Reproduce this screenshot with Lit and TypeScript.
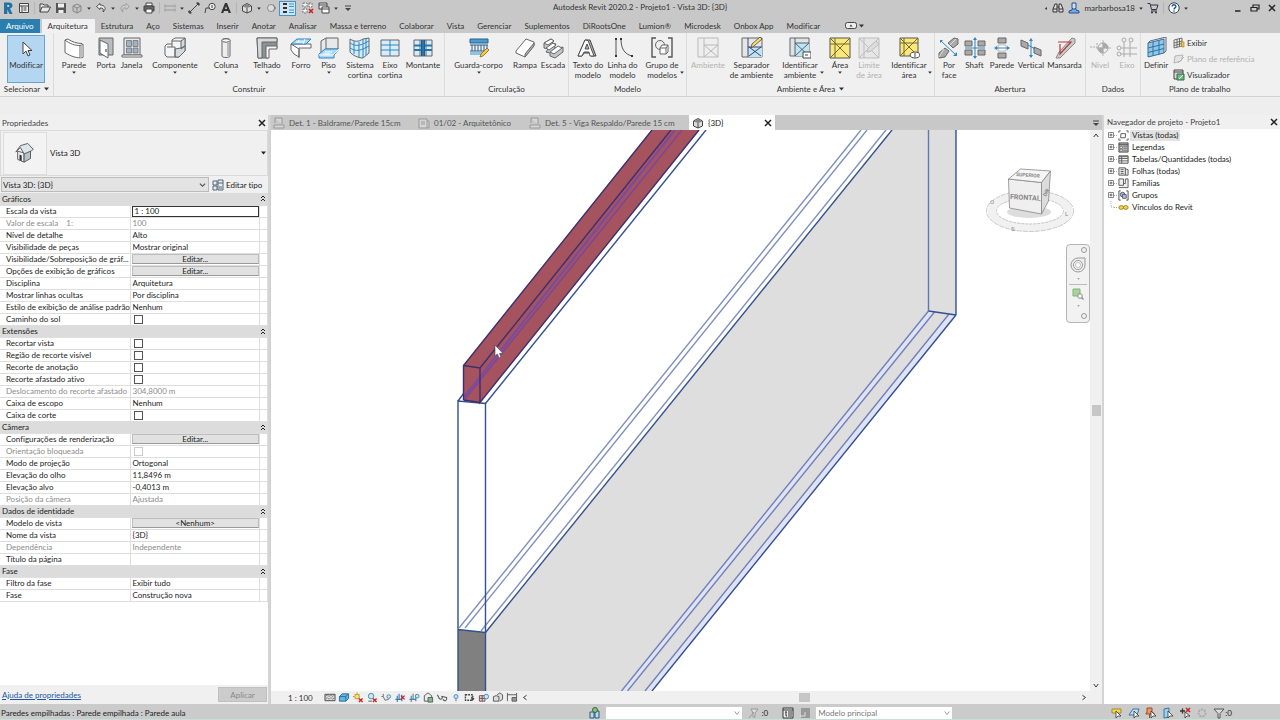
import { LitElement, html, svg, css, nothing, TemplateResult } from "lit";
import { customElement, property, state } from "lit/decorators.js";
import { classMap } from "lit/directives/class-map.js";
import { styleMap } from "lit/directives/style-map.js";

const K = "#666";
const B = "#2f86c4";
const G = "#d7dadc";

/* Ribbon glyphs, 22 x 22 */
const big: Record<string, TemplateResult> = {
  cursor: svg`<path d="M8 4v12l3-3 2 5 2-1-2-4.500h4z" fill="#fff" stroke="#444"/>`,
  wall: svg`<path d="M2 3l3-1c4 3 9 4.500 14 4.500l1 1v13c-6 1-12-1-18-5z" fill="#fff" stroke="${K}"/><path d="M2 3c5 4 10 5.500 15 5.500V20M17 8.500l3-1" fill="none" stroke="${K}"/><path d="M17 9l3-1v12l-3 1z" fill="#bbb"/>`,
  door: svg`<path d="M4 1h14v17H4z" fill="#b9bdc0" stroke="${K}"/><path d="M5 3l8 4v14l-8-5z" fill="#fff" stroke="${K}"/><path d="M11 12v3" stroke="#333"/>`,
  window: svg`<path d="M3 1h16v17H3z" fill="#e8e8e8" stroke="${K}"/><path d="M5.500 3.500h5v6h-5zM12 3.500h5v6h-5zM5.500 11h5v5h-5zM12 11h5v5h-5z" fill="#9fb3c4" stroke="${K}" stroke-width=".7"/><path d="M1 18h20v2H1z" fill="#fff" stroke="${K}"/>`,
  component: svg`<path d="M1 9l2-2h5V3l3-2h10v13l-6 6H3l-2-2z" fill="#f4f5f6" stroke="${K}"/><path d="M11 12l6-1 4-2v5l-6 6h-4zM17 4l4-3v8l-4 3z" fill="${G}" stroke="${K}"/><path d="M8 4h9M3 10h8v10M8 7v3" fill="none" stroke="${K}"/>`,
  column: svg`<path d="M7 3c0-2 8-2 8 0v16c0 2-8 2-8 0z" fill="#eceeef" stroke="${K}"/><ellipse cx="11" cy="3.500" rx="4" ry="1.700" fill="#fff" stroke="${K}"/><path d="M13 6v13" stroke="#bbb" stroke-width="2"/>`,
  roof: svg`<path d="M1 1h20v10h-9v10H2z" fill="#8d9194" stroke="${K}"/><path d="M1 1h20v4H6v16H2z" fill="${G}" stroke="${K}"/><path d="M10 9h11v3h-8v9h-3z" fill="#f6f6f6" stroke="${K}"/>`,
  ceiling: svg`<path d="M1 7h20v4H9v9l-5-3-3-4z" fill="#fff" stroke="${K}"/><path d="M1 7l6-5h14l-5 5z" fill="#a9d8f2" stroke="${B}"/><path d="M6 5h8M9 3l-1 3M15 2l-2 5" stroke="#fff"/><path d="M1 7l8 5v9" fill="none" stroke="${K}"/>`,
  floor: svg`<path d="M3 4l5-3h12v12l-5 4H3z" fill="#e6e8e9" stroke="${K}"/><path d="M8 1v11l-6 5M8 12h12" fill="none" stroke="${K}"/><path d="M1 17l6-5h14l-5 6v3H1z" fill="#a9d8f2" stroke="${B}"/><path d="M7 15h7M5 17h7M1 18h14l6-6" fill="none" stroke="#fff"/>`,
  curtain: svg`<path d="M1 2c5 3 8 3 13 0l6-1v15l-6 5C9 21 3 18 1 15z" fill="#d4ebf8" stroke="${K}"/><path d="M1 6c5 3 8 3 13 1l6-3M1 11c5 3 8 3 13 1l6-3M5 4v13M10 5v15M14 2v19M17 2v16" fill="none" stroke="${B}"/>`,
  grid: svg`<path d="M2 3h18v16H2z" fill="#d9edf8" stroke="${K}"/><path d="M11 3v16M2 8h18M2 13h18" stroke="${B}"/>`,
  mullion: svg`<path d="M2 3h18v16H2z" fill="#d9edf8" stroke="${K}"/><path d="M8 3v16M14 3v16" stroke="${K}"/><path d="M9 3h4v16H9z" fill="#2676b2"/><path d="M2 8.500h18M2 13h18" stroke="#2676b2" stroke-width="2"/><path d="M9.500 3v16M12.500 3v16" stroke="#1c4d74" stroke-width=".6"/>`,
  rail: svg`<path d="M2 2h18v4H2z" fill="#4a9bd0" stroke="#27618b"/><path d="M2 8h18M2 14h18M4 8v6M7 8v6M10 8v6M13 8v6M16 8v6M19 8v6" stroke="#27618b"/><path d="M2 15h12v3H2z" fill="#8fc3e4"/><path d="M12 20l1-3 6-6 2 2-6 6z" fill="#f7c84b" stroke="#8a6414" stroke-width=".8"/>`,
  ramp: svg`<path d="M2 14L12 2l8 3v3l-9 12-9-4z" fill="#fff" stroke="${K}"/><path d="M20 6v3l-9 11v-3z" fill="#aeb2b5" stroke="${K}"/>`,
  stair: svg`<path d="M2 6l7-4 3 2-2 2 4 1-2 3 5 1 4-1v5l-8 6-5-2v-3l-4-1 2-3-4-1z" fill="#c4c7c9" stroke="${K}"/><path d="M2 6l7-4 3 2-6 4zM4 11l7-5 3 2-7 5zM8 15l8-6 4 2-8 6z" fill="#fff" stroke="${K}"/>`,
  text3d: svg`<path d="M1 19L8 3h5l6 16h-5l-1-3H7l-2 3z" fill="#aeb2b5" stroke="#444"/><path d="M1 19L8 3l3 .5L17 19h-4l-1-4H7l-2 4zM8 12h4L10 7z" fill="#fff" stroke="#444" stroke-width=".9"/>`,
  mline: svg`<path d="M4 2v17M9 2c0 9 3 15 11 17" fill="none" stroke="#555"/><path d="M3 1h2v2H3zM3 18h2v2H3zM8 1h2v2H8zM19 18h2v2h-2z" fill="#333"/>`,
  group: svg`<path d="M5 1H1v19h4M17 1h4v19h-4" fill="none" stroke="#555" stroke-width="1.400"/><circle cx="9" cy="8" r="4.500" fill="#eee" stroke="${K}"/><path d="M9 11l2-3h6v7l-2 2H9z" fill="#fff" stroke="${K}"/><path d="M9 11h6v6M15 11l2-3" fill="none" stroke="${K}"/>`,
  room: svg`<path d="M1 1h20v19H1zM7 1v19M7 8h14M7 8l14 12M21 8L7 20" fill="#eee" stroke="#b9b9b9"/>`,
  roomSep: svg`<path d="M1 1h20v19H1z" fill="#e4e6e8" stroke="${K}"/><path d="M7 10h14v10H7z" fill="#bfe3f1"/><path d="M7 1v19M7 10h14M8 19l12-9M8 10l12 9" stroke="#336" stroke-width=".9"/><path d="M10 11l1-4 8-7 2 2-8 7z" fill="#f7e06b" stroke="#444" stroke-width=".8"/>`,
  roomTag: svg`<path d="M1 1h19v18H1z" fill="#dfe3e6" stroke="${K}"/><path d="M6 6h14v13H6z" fill="#bfe3f1"/><path d="M6 1v18M6 6h14M6 6l14 13M20 6L6 19" stroke="#456" stroke-width=".9"/><path d="M14 15h8v6h-8z" fill="#fff" stroke="#444"/><path d="M16 18h3" stroke="#444"/>`,
  area: svg`<path d="M1 1h20v20H1z" fill="#fae87c" stroke="#555"/><path d="M6 1v20M1 7h20M1 1l20 20M21 1L1 21" stroke="#776a2c" fill="none"/>`,
  areaLim: svg`<path d="M1 1h20v20H1zM1 1l20 20M21 1L1 21M6 1v20" fill="#e6e6e6" stroke="#bdbdbd"/><path d="M9 15l1-4 8-7 3 3-8 7z" fill="#ddd" stroke="#bbb"/>`,
  areaTag: svg`<path d="M2 1h18v18H2z" fill="#fae87c" stroke="#555"/><path d="M6 1v18M2 6h18M2 1l18 18M20 1L2 19" stroke="#776a2c"/><ellipse cx="17" cy="18" rx="5" ry="3" fill="#fff" stroke="#444"/><path d="M17 16v4" stroke="#444"/>`,
  byFace: svg`<path d="M10 6l6-5 4 1v5l-5 4zM1 16l6-5 4 3-4 6-6 1z" fill="#aaa" stroke="#666"/><path d="M1 20l5-8M12 8l6-6" stroke="#ddd"/><path d="M3 4l15 14" stroke="${B}"/><path d="M2 3h3l-3 3zM19 19v-4l-4 4z" fill="${B}"/>`,
  shaft: svg`<path d="M1 4h7v5H1zM14 4h7v5h-7zM1 13h7v5H1zM14 13h7v5h-7z" fill="#aaa" stroke="#666"/><path d="M11 1v20M1 11h20" stroke="${B}"/><path d="M9 3l2-3 2 3zM9 19l2 3 2-3z" fill="${B}"/>`,
  wallOp: svg`<path d="M7 1h8v5H7zM7 16h8v5H7z" fill="#aaa" stroke="#666"/><path d="M7 8h8v6H7z" fill="#fff" stroke="#bbb"/><path d="M4 11h14" stroke="${B}"/><path d="M6 9l-3 2 3 2zM16 9l3 2-3 2z" fill="${B}"/>`,
  vertical: svg`<path d="M1 3l7 3v6L1 9zM14 10l7 3v6l-7-3z" fill="#aaa" stroke="#666"/><path d="M11 2v18M8 8l7 4" stroke="${B}"/><path d="M9 4l2-3 2 3zM9 18l2 3 2-3z" fill="${B}"/>`,
  dormer: svg`<path d="M2 21l3-6L18 1l3 1v4L6 21z" fill="#c9c9c9" stroke="#888"/><path d="M4 5h13L6 17V7" fill="none" stroke="#b23b3b" stroke-width="1.200"/>`,
  level: svg`<path d="M1 10h6M8 6v6" stroke="#aaa" stroke-dasharray="2 1"/><circle cx="14" cy="11" r="5" fill="#eee" stroke="#aaa"/><path d="M14 6a5 5 0 0 1 5 5h-5zM14 16a5 5 0 0 1-5-5h5zM14 3v16M7 11h15" fill="#aaa" stroke="#aaa" stroke-width=".8"/>`,
  axis: svg`<path d="M8 5v15M14 5v15M4 11h17M4 17h17" stroke="#aaa"/><g fill="#f0f0f0" stroke="#aaa"><circle cx="8" cy="3" r="2"/><circle cx="15" cy="3" r="2"/><circle cx="3" cy="11" r="2"/><circle cx="3" cy="17" r="2"/></g>`,
  define: svg`<path d="M3 6l16-4v14L3 20z" fill="#8cc9ea" stroke="#35709b"/><path d="M8 5v14M14 3.500v14M3 11l16-4M3 15.500l16-4" stroke="#35709b"/><path d="M3 6l2-2 16-4v14l-2 2" fill="none" stroke="#667"/>`,
};

/* Small glyphs, 12 x 12 */
const small: Record<string, TemplateResult> = {
  logo: svg`<path d="M2 .5h5c4.500 0 4.500 5.500 1 6L10.500 12H7.500L5.300 7.500V12H2z" fill="#2272a8"/><path d="M5.300 3v2h1c1.500 0 1.500-2 0-2z" fill="#cbd9e3"/>`,
  home: svg`<path d="M1.500 1.500h9v9h-9zM1.500 4h9M4 4v6.500M5.500 6h3M5.500 8h3" fill="#eee" stroke="#444"/>`,
  open: svg`<path d="M1 10V2h3l1 1h4v2M1 10l2-5h8.500L9 10z" fill="#e8e8e8" stroke="#444"/>`,
  save: svg`<path d="M1 1h9.500l.5.500V11H1z" fill="#555"/><path d="M3 1.500h6v4H3zM3.500 8h5v3h-5z" fill="#eee"/>`,
  cloud: svg`<path d="M2 4l4-2 4 2v5l-4 2-4-2zM6 6v5M2 4l4 2 4-2" fill="#c2c2c2" stroke="#888"/>`,
  undo: svg`<path d="M5 1.500L1.500 4.500 5 7.500V6c3-.3 4 1 3 4 4-3 2-7-3-7z" fill="#eee" stroke="#444" stroke-width=".9"/>`,
  redo: svg`<path d="M7 1.500l3.500 3L7 7.500V6C4 5.700 3 7 4 10 0 7 2 3 7 3z" fill="#ccc" stroke="#999" stroke-width=".9"/>`,
  print: svg`<path d="M3 1h6v3H3z" fill="#fff" stroke="#444"/><path d="M1 4h10v5H1z" fill="#666" stroke="#444"/><path d="M3 7h6v4H3z" fill="#fff" stroke="#444"/>`,
  measure: svg`<path d="M1 4h10M1 8h10M1 2.500v3M11 2.500v3M1 6.500v3M11 6.500v3" stroke="#999"/>`,
  dim: svg`<path d="M2 10l8-8" stroke="#444"/><path d="M1 8l3 3-2 1-2-2zM8 1l3 3 1-2-2-2z" fill="#444"/>`,
  tag: svg`<circle cx="8" cy="4.500" r="3.200" fill="#eee" stroke="#444"/><path d="M8 3v3M1 11l1-5h3" fill="none" stroke="#444"/>`,
  letter: svg`<path d="M1 11L5 1h2l4 10H8.500L8 9H4l-.7 2z" fill="#333"/><path d="M6 4l1 3H5z" fill="#ccc"/>`,
  cube: svg`<path d="M1.500 4L6 1.500 10.500 4v5L6 11 1.500 9z" fill="#ddd" stroke="#444"/><path d="M1.500 4.500L6 6l4.500-1.500L6 2z" fill="#888"/><path d="M6 6v5" stroke="#444"/>`,
  section: svg`<path d="M8 2l3 4-3 4z" fill="#777"/><circle cx="6" cy="6" r="3.500" fill="#ddd" stroke="#777" stroke-width=".8"/>`,
  thin: svg`<path d="M1 2h4M1 6h4M1 10h4" stroke="#333" stroke-width="2"/><path d="M7 2h5M7 4.500h5M7 8h5M7 10.500h5" stroke="#39c"/>`,
  closeWin: svg`<path d="M1 1h4v4H1zM7 1h3v4H7zM1 7h4v4H1z" fill="#eee" stroke="#777" stroke-dasharray="2 1"/><path d="M7 7l4 4M11 7l-4 4" stroke="#c22" stroke-width="1.600"/>`,
  switchWin: svg`<path d="M1 1h8v6H1zM1 3h8" fill="#eee" stroke="#444"/><path d="M4 5h7v6H4zM4 7h7" fill="#fff" stroke="#444"/>`,
  menu: svg`<path d="M3 4h6" stroke="#444"/><path d="M3 6h6L6 9z" fill="#444"/>`,
  pill: svg`<rect x=".5" y="2.500" width="11" height="6" rx="2" fill="#eee" stroke="#444"/><path d="M4.500 6.500h3L6 4.500z" fill="#333"/>`,
  binoc: svg`<path d="M1 10V7l2-5h2v8zM7 10V2h2l2 5v3zM5 5h2" fill="#ddd" stroke="#333"/><path d="M1 7h4M7 7h4" stroke="#333"/>`,
  user: svg`<path d="M1 11V9l3-1V6.500h4V8l3 1v2z" fill="#7fa8dc" stroke="#23508e"/><path d="M4 1h4v5l-1 1H5L4 6z" fill="#cfe0f5" stroke="#23508e"/>`,
  cart: svg`<path d="M.5 1.500H3l1.500 6h5l1.500-4.500H3.500M4 9h6" fill="none" stroke="#334"/><circle cx="5" cy="10.500" r="1" fill="#334"/><circle cx="9" cy="10.500" r="1" fill="#334"/>`,
  help: svg`<circle cx="6" cy="6" r="5.200" fill="#fff" stroke="#345"/><path d="M4.200 4.500c0-2.500 3.700-2.300 3.700 0C7.900 6 6 5.800 6 7.500M6 8.500v1.200" fill="none" stroke="#1f4f9a" stroke-width="1.400"/>`,
  min: svg`<path d="M3 9h5.500" stroke="#222" stroke-width="1.500"/>`,
  restore: svg`<path d="M4 3h6v4H4z" fill="none" stroke="#222" stroke-width="1.200"/><path d="M2 5.500h6V9H2z" fill="#ccc" stroke="#222" stroke-width="1.200"/>`,
  close: svg`<path d="M3 3l6 6M9 3L3 9" stroke="#222" stroke-width="1.500"/>`,
  show: svg`<path d="M1 3l8-2v8l-8 2zM4 2.200v8M6.500 1.600v8M1 6l8-2M1 8.500l8-2" fill="#eee" stroke="#555" stroke-width=".8"/><path d="M8 5h3v5H9z" fill="#f4c542" stroke="#a67c1a" stroke-width=".6"/>`,
  plane: svg`<path d="M2 3l8-1-2 6-7 2zM5 10l6-6" fill="#e4e4e4" stroke="#b5b5b5"/>`,
  viewer: svg`<path d="M1 1h9v9H1zM1 3h9" fill="#ddd" stroke="#444"/><path d="M4 5h7v6H4z" fill="#6cbf6c" stroke="#366"/><path d="M6 10l4-4" stroke="#fff"/>`,
  sheetTab: svg`<path d="M2 1h7v6M2 1v5M1 8h10v3H1z" fill="#d6d6d6" stroke="#999"/>`,
  sheet: svg`<path d="M1 2h8v9H1zM3 5h4M3 7h4M9 4h2v7H9" fill="#d6d6d6" stroke="#999"/>`,
  views: svg`<path d="M3 1H1v2M9 1h2v2M1 9v2h2M11 9v2H9" fill="none" stroke="#555"/><rect x="3.500" y="4" width="5" height="4.500" fill="#fff" stroke="#555" transform="skewX(-4)"/>`,
  legend: svg`<path d="M1 1h10v10H1z" fill="#bbb" stroke="#444"/><path d="M1 3h10" stroke="#444"/><path d="M2 5h3v2H2zM2 8h3v2H2zM6 5h4M6 7h4M6 9h4" fill="#eee" stroke="#555" stroke-width=".6"/>`,
  table: svg`<path d="M1 2h10v8H1z" fill="#fff" stroke="#444"/><path d="M1 3h10M1 5h10M1 7.500h10M4 3v7" stroke="#555"/>`,
  folha: svg`<path d="M1 2h7v8H1zM3 4h3M3 6h3M3 8h3M8 3l3 1v6H8" fill="#e8e8e8" stroke="#555"/>`,
  family: svg`<path d="M1 1h5v7H1zM1 10.500h10V1H8v5H6" fill="#eee" stroke="#555"/>`,
  grp: svg`<path d="M3 1H1v10h2M9 1h2v10H9" fill="none" stroke="#444"/><circle cx="5" cy="5" r="2.500" fill="#aac" stroke="#557"/><path d="M5 5h4v4H5z" fill="#b6c6d6" stroke="#557"/>`,
  link: svg`<rect x="1" y="4" width="5" height="4" rx="2" fill="#f3d64e" stroke="#9a7b12"/><rect x="6" y="4" width="5" height="4" rx="2" fill="#f3d64e" stroke="#9a7b12"/>`,
  hatch: svg`<path d="M.5 2.500h11v7H.5z" fill="#ddd" stroke="#444"/><path d="M1 5l2-2 2 2 2-2 2 2 2-2M1 8l2-2 2 2 2-2 2 2 2-2" fill="none" stroke="#666" stroke-width=".8"/>`,
  style: svg`<path d="M1 5l3-3h7v5L8 10H1z" fill="#62b7e6" stroke="#276a96"/><path d="M1 5h7v5M8 5l3-3" fill="none" stroke="#276a96"/>`,
  sun: svg`<circle cx="5" cy="5" r="2.500" fill="#fbe38a" stroke="#c08a1a"/><path d="M5 .5v1.500M.5 5H2M2 2l1 1M8 2L7 3M2 8l1-1" stroke="#c08a1a"/><path d="M7 7l4 4M11 7l-4 4" stroke="#c22" stroke-width="1.500"/>`,
  shadow: svg`<circle cx="5" cy="4.500" r="3" fill="#cfe6f5" stroke="#48a"/><path d="M2 10h4" stroke="#555"/><path d="M7 7l4 4M11 7l-4 4" stroke="#c22" stroke-width="1.500"/>`,
  render: svg`<path d="M1 5h2l2 4 4-1M3 2v3" fill="none" stroke="#666"/><circle cx="9" cy="5" r="2" fill="#cfe6f5" stroke="#48a"/>`,
  crop: svg`<path d="M1 8h7M3 4v7M5 2v6M8 3v7" stroke="#2f7db5" stroke-width="1.200"/><path d="M7 4l4 4M11 4l-4 4" stroke="#c22" stroke-width="1.400"/>`,
  cropShow: svg`<path d="M1 8h7M3 4v7M5 2v6M8 3v7" stroke="#557f9d" stroke-width="1.200"/><circle cx="9.500" cy="4.500" r="2" fill="#cfe6f5" stroke="#48a"/>`,
  lock3d: svg`<path d="M2 4l4-3 4 3v6H2z" fill="#eee" stroke="#555"/><path d="M6 6h5v5H6z" fill="#8fb58f" stroke="#465"/>`,
  glasses: svg`<path d="M1 3l2 4c2 2 4 0 3-2l5 1c1 3-2 5-4 2" fill="none" stroke="#555" stroke-width="1.200"/>`,
  bulb: svg`<circle cx="6" cy="5" r="2.200" fill="#bfe0f5" stroke="#3c8dc4"/><path d="M5.500 8h1v2h-1z" fill="#555"/>`,
  frame: svg`<path d="M1 3h8v6H1z" fill="none" stroke="#444" stroke-width="1.400" stroke-dasharray="2 1"/><path d="M7 5l4 2-3 3z" fill="#444"/>`,
  analytic: svg`<path d="M1 4h6v6H1zM4 4v6M1 7h6" fill="#ddd" stroke="#744"/><circle cx="8.500" cy="5" r="2.500" fill="#cfe6f5" stroke="#48a"/>`,
  cubes: svg`<path d="M1 5l3-1 3 1v5H1zM5 3l3-2 3 2v5l-3 2" fill="#ddd" stroke="#555"/>`,
  constraint: svg`<path d="M1 3h10M1 1v9M11 1v5" stroke="#555"/><path d="M6 6h5v4H6z" fill="#999" stroke="#555"/>`,
  worksets: svg`<path d="M1 5h4v6H1zM6 4h4v7H6z" fill="#b8d8ee" stroke="#357"/><circle cx="6" cy="3" r="2.500" fill="#8cc37c" stroke="#364"/>`,
  edit: svg`<path d="M3 2h7L7 6v4H5V6z" fill="#ddd" stroke="#999"/><path d="M1 11L6 5" stroke="#999"/>`,
  list: svg`<path d="M1 1h10v10H1z" fill="#eee" stroke="#333"/><path d="M1 3h10M3 5h2M6 5h4M6 7h4M6 9h4M4 5v4h1" fill="none" stroke="#333"/>`,
  excl: svg`<path d="M2 1h9v10H2z" fill="#999"/><path d="M1 9h5V5" fill="none" stroke="#ddd"/>`,
  selLink: svg`<path d="M1 2h9v4H1z" fill="#f0d95a" stroke="#a8891c"/><path d="M5 4v7l2-2h3z" fill="#fff" stroke="#333" stroke-width=".8"/>`,
  selUnder: svg`<path d="M1 8l4-6h6l-2 6z" fill="#bfe0f3" stroke="#37a"/><path d="M6 4v7l2-2h3z" fill="#fff" stroke="#333" stroke-width=".8"/>`,
  selPin: svg`<path d="M2 1h5v5h2v1H1V6h1zM4.500 7v4" fill="#e79a6d" stroke="#a44b22"/><path d="M6 4v7l2-2h3z" fill="#fff" stroke="#333" stroke-width=".8"/>`,
  selFace: svg`<path d="M2 2l5-1v9l-5 1z" fill="#9fd0ee" stroke="#37a"/><path d="M6 4v7l2-2h3z" fill="#fff" stroke="#333" stroke-width=".8"/>`,
  drag: svg`<path d="M1 4h5M3.500 1.500v5" stroke="#333" stroke-width="1.300"/><path d="M7 1l4 4M11 1L7 5" stroke="#c22" stroke-width="1.500"/><path d="M6 5v6l2-2h3z" fill="#fff" stroke="#333" stroke-width=".8"/>`,
  gear: svg`<circle cx="6" cy="6" r="3.500" fill="none" stroke="#aaa" stroke-width="2" stroke-dasharray="2 1"/>`,
  funnel: svg`<path d="M1 2h10L7 6.500V11H5V6.500z" fill="#ddd" stroke="#555"/>`,
  editType: svg`<path d="M1 2h4v4H1zM1 7h4v4H1zM6 1h5v10H6zM6 4h5" fill="#e9eef2" stroke="#567"/><path d="M7 7h3v3H7z" fill="#9ab" />`,
  house: svg`<path d="M2 5v4.500L5.500 11V6z" fill="#eef2f4" stroke="#555" stroke-width=".5"/><path d="M5.500 6l3.500-1.500V9L5.500 11z" fill="#b6c3ca" stroke="#555" stroke-width=".5"/><path d="M1 5.500L3.500 2 7.500.8 10.500 4l-1 .8L5.500 6.500 3.500 3z" fill="#dfe6ea" stroke="#555" stroke-width=".5"/><path d="M3 6.800l1.200.5v3L3 9.800z" fill="#333"/>`,
};

const glyph = (name: string, cls = "g12") =>
  html`<svg class=${cls} viewBox="0 0 12 12" aria-hidden="true">${small[name]}</svg>`;
const caret = (cls = "caret") =>
  html`<svg class=${cls} viewBox="0 0 5 4" aria-hidden="true"><path d="M0 .5h5L2.500 3.500z" fill="currentColor" /></svg>`;
const chevron = (cls: string, d: string) =>
  html`<svg class=${cls} viewBox="0 0 8 8" aria-hidden="true"><path d=${d} fill="none" stroke="currentColor" stroke-width="1.300" /></svg>`;

const shared = css`
  :host, * { box-sizing: border-box; }
  button, select, input {
    font: inherit; color: inherit; margin: 0; padding: 0; border: 0;
    background: none; border-radius: 0; outline: 0; font-variant-ligatures: none;
  }
  svg { display: block; flex: none; }
  .g12 { width: 12px; height: 12px; }
  .caret { width: 5px; height: 4px; }
`;

interface Tool { label: string; icon: string; width: number; menu?: boolean; off?: boolean }
interface Panel { title: string; tools: Tool[]; menu?: boolean; extra?: boolean }

const t = (label: string, icon: string, width: number, menu = false, off = false): Tool => ({ label, icon, width, menu, off });

const panels: Panel[] = [
  { title: "Construir", tools: [
    t("Parede", "wall", 40, true), t("Porta", "door", 24), t("Janela", "window", 27), t("Componente", "component", 60, true),
    t("Coluna", "column", 42, true), t("Telhado", "roof", 40, true), t("Forro", "ceiling", 28), t("Piso", "floor", 27, true),
    t("Sistema\ncortina", "curtain", 36), t("Eixo\ncortina", "grid", 24), t("Montante", "mullion", 42)] },
  { title: "Circulação", tools: [t("Guarda-corpo", "rail", 67, true), t("Rampa", "ramp", 26), t("Escada", "stair", 30)] },
  { title: "Modelo", tools: [t("Texto do\nmodelo", "text3d", 38), t("Linha do\nmodelo", "mline", 31), t("Grupo de\nmodelos", "group", 48, true)] },
  { title: "Ambiente e Área", menu: true, tools: [
    t("Ambiente", "room", 42, false, true), t("Separador\nde ambiente", "roomSep", 45), t("Identificar\nambiente", "roomTag", 52, true),
    t("Área", "area", 28, true), t("Limite\nde área", "areaLim", 30, false, true), t("Identificar\nárea", "areaTag", 50, true)] },
  { title: "Abertura", tools: [
    t("Por\nface", "byFace", 28), t("Shaft", "shaft", 23), t("Parede", "wallOp", 32), t("Vertical", "vertical", 26), t("Mansarda", "dormer", 41)] },
  { title: "Dados", tools: [t("Nível", "level", 28, false, true), t("Eixo", "axis", 26, false, true)] },
  { title: "Plano de trabalho", extra: true, tools: [t("Definir", "define", 30)] },
];

@customElement("app-titlebar")
class AppTitlebar extends LitElement {
  static styles = [shared, css`
    :host { display: grid; grid-template-columns: 1fr auto 1fr; align-items: center; height: 19px; padding: 0 0 3px; color: #333; }
    .tools { display: flex; align-items: center; }
    .tools button, .account button { display: grid; place-items: center; width: 16px; height: 16px; }
    .tools .narrow, .account .narrow { width: 8px; }
    .tools .on { width: 17px; height: 15px; margin: 0 4px 0 0; background: #cfe4f5; border: 1px solid #4b93c4; }
    .sep { width: 1px; height: 12px; margin: 0 2px; background: #b4b4b4; }
    h1 { margin: 0; font-size: inherit; line-height: 10px; font-weight: 400; white-space: nowrap; padding-bottom: 2px; }
    .account { display: flex; align-items: center; justify-content: flex-end; }
    .account .name { width: auto; padding: 0 2px; }
    .account .win { width: 17px; }
    .account .gap { width: 39px; }
    .caret { width: 4px; height: 3px; }
  `];
  render() {
    const b = (n: string, label: string) => html`<button aria-label=${label}>${glyph(n)}</button>`;
    const c = html`<button class="narrow" aria-label="Mais opções">${caret()}</button>`;
    return html`
      <div class="tools">
        ${b("logo", "Revit")}${b("home", "Início")}<span class="sep"></span>
        ${b("open", "Abrir")}${b("save", "Salvar")}${b("cloud", "Sincronizar")}${c}
        ${b("undo", "Desfazer")}${c}${b("redo", "Refazer")}${c}${b("print", "Imprimir")}<span class="sep"></span>
        ${b("measure", "Medir")}${c}${b("dim", "Cota")}${b("tag", "Identificador")}${b("letter", "Texto")}<span class="sep"></span>
        ${b("cube", "Vista 3D")}${c}${b("section", "Corte")}
        <button class="on" aria-label="Linhas finas">${glyph("thin")}</button>
        ${b("closeWin", "Fechar ocultas")}${b("switchWin", "Alternar janelas")}${c}${b("menu", "Personalizar")}
      </div>
      <h1>Autodesk Revit 2020.2 - Projeto1 - Vista 3D: {3D}</h1>
      <div class="account">
        <button class="narrow" aria-label="Recolher"><svg class="caret" viewBox="0 0 4 5"><path d="M3.500 0v5L0 2.500z" fill="#333" /></svg></button>
        ${b("binoc", "Pesquisar")}${b("user", "Conta")}
        <button class="name">marbarbosa18</button>${c}
        ${b("cart", "Loja")}<span class="sep"></span>${b("help", "Ajuda")}${c}
        <span class="gap"></span>
        <button class="win" aria-label="Minimizar">${glyph("min")}</button>
        <button class="win" aria-label="Restaurar">${glyph("restore")}</button>
        <button class="win" aria-label="Fechar">${glyph("close")}</button>
      </div>`;
  }
}

@customElement("app-ribbon")
class AppRibbon extends LitElement {
  @state() private active = "Arquitetura";
  static styles = [shared, css`
    :host { display: block; color: #333; }
    .tabs { display: flex; height: 14px; align-items: stretch; }
    .tabs button { padding: 0 7px 0 6px; white-space: nowrap; height: 14px; line-height: 14px; }
    .tabs .file { background: #2b7fae; color: #fff; margin-right: 2px; padding: 0 6px; }
    .tabs .active { background: #f1f1f1; }
    .tabs .pill { display: flex; align-items: center; gap: 2px; margin-left: 12px; }
    .body { display: flex; height: 64px; background: #f0f0f0; border-bottom: 1px solid #d2d2d2; }
    .strip { height: 18px; background: #eee; }
    .panel { display: flex; flex-direction: column; border-right: 1px solid #dcdcdc; }
    .panel:last-child { border-right: 0; }
    .row { display: flex; flex: 1; min-height: 0; padding-top: 4px; }
    .tool { display: flex; flex-direction: column; align-items: center; height: 44px; position: relative; flex: none; }
    .tool.off { color: #b0b0b0; }
    .tool > svg:first-child { width: 22px; height: 22px; }
    .tool .label { margin-top: 1px; line-height: 10px; white-space: pre; text-align: center; }
    .tool .caret { width: 4px; height: 3px; margin-top: 1px; }
    .tool .side { position: absolute; right: 2px; top: 33px; }
    .title { height: 15px; flex: none; line-height: 14px; text-align: center; display: flex; justify-content: center; align-items: center; gap: 4px; }
    .select { width: 54px; }
    .modify { display: flex; flex-direction: column; align-items: center; width: 38px; height: 48px; margin: -2px 0 0 7px; padding-top: 2px; background: #b4d6f0; border: 1px solid #64a4d4; }
    .modify svg { width: 22px; height: 22px; }
    .modify .label { line-height: 10px; }
    .extra { display: flex; flex-direction: column; gap: 4px; padding: 0 4px 0 2px; }
    .extra button { display: flex; align-items: center; gap: 2px; height: 12px; white-space: nowrap; }
    .extra .off { color: #b0b0b0; }
  `];
  private tool(x: Tool) {
    const two = x.label.includes("\n");
    return html`<button class=${classMap({ tool: true, off: !!x.off })} ?disabled=${x.off} style=${styleMap({ width: `${x.width}px` })}>
      <svg viewBox="0 0 22 22" aria-hidden="true">${big[x.icon]}</svg>
      <span class="label">${x.label}</span>
      ${x.menu ? caret(two ? "caret side" : "caret") : nothing}
    </button>`;
  }
  render() {
    const tabs = ["Arquitetura", "Estrutura", "Aço", "Sistemas", "Inserir", "Anotar", "Analisar", "Massa e terreno", "Colaborar", "Vista",
      "Gerenciar", "Suplementos", "DiRootsOne", "Lumion®", "Microdesk", "Onbox App", "Modificar"];
    return html`
      <nav class="tabs" aria-label="Guias">
        <button class="file">Arquivo</button>
        ${tabs.map((n) => html`<button class=${classMap({ active: n === this.active })} @click=${() => (this.active = n)}>${n}</button>`)}
        <button class="pill" aria-label="Minimizar faixa">${glyph("pill")}${caret()}</button>
      </nav>
      <div class="body">
        <section class="panel select">
          <div class="row"><button class="modify"><svg viewBox="0 0 22 22" aria-hidden="true">${big.cursor}</svg><span class="label">Modificar</span></button></div>
          <div class="title">Selecionar ${caret()}</div>
        </section>
        ${panels.map((p) => html`<section class="panel">
          <div class="row">
            ${p.tools.map((x) => this.tool(x))}
            ${p.extra ? html`<div class="extra">
              <button>${glyph("show")}Exibir</button>
              <button class="off" disabled>${glyph("plane")}Plano de referência</button>
              <button>${glyph("viewer")}Visualizador</button>
            </div>` : nothing}
          </div>
          <div class="title">${p.title}${p.menu ? caret() : nothing}</div>
        </section>`)}
      </div>
      <div class="strip"></div>`;
  }
}

type Kind = "text" | "check" | "button" | "field";
interface Prop { name: string; value?: string; kind?: Kind; off?: boolean }
const groups: { title: string; rows: Prop[] }[] = [
  { title: "Gráficos", rows: [
    { name: "Escala da vista", value: "1 : 100", kind: "field" }, { name: "Valor de escala    1:", value: "100", off: true },
    { name: "Nível de detalhe", value: "Alto" }, { name: "Visibilidade de peças", value: "Mostrar original" },
    { name: "Visibilidade/Sobreposição de gráf...", value: "Editar...", kind: "button" }, { name: "Opções de exibição de gráficos", value: "Editar...", kind: "button" },
    { name: "Disciplina", value: "Arquitetura" }, { name: "Mostrar linhas ocultas", value: "Por disciplina" },
    { name: "Estilo de exibição de análise padrão", value: "Nenhum" }, { name: "Caminho do sol", kind: "check" }] },
  { title: "Extensões", rows: [
    { name: "Recortar vista", kind: "check" }, { name: "Região de recorte visível", kind: "check" }, { name: "Recorte de anotação", kind: "check" },
    { name: "Recorte afastado ativo", kind: "check" }, { name: "Deslocamento do recorte afastado", value: "304,8000 m", off: true },
    { name: "Caixa de escopo", value: "Nenhum" }, { name: "Caixa de corte", kind: "check" }] },
  { title: "Câmera", rows: [
    { name: "Configurações de renderização", value: "Editar...", kind: "button" }, { name: "Orientação bloqueada", kind: "check", off: true },
    { name: "Modo de projeção", value: "Ortogonal" }, { name: "Elevação do olho", value: "11,8496 m" }, { name: "Elevação alvo", value: "-0,4013 m" },
    { name: "Posição da câmera", value: "Ajustada", off: true }] },
  { title: "Dados de identidade", rows: [
    { name: "Modelo de vista", value: "<Nenhum>", kind: "button" }, { name: "Nome da vista", value: "{3D}" },
    { name: "Dependência", value: "Independente", off: true }, { name: "Título da página", value: "" }] },
  { title: "Fase", rows: [{ name: "Filtro da fase", value: "Exibir tudo" }, { name: "Fase", value: "Construção nova" }] },
];

@customElement("app-properties")
class AppProperties extends LitElement {
  static styles = [shared, css`
    :host { display: flex; flex-direction: column; background: #f0f0f0; color: #222; border-right: 2px solid #d4d4d4; }
    header { display: flex; justify-content: space-between; align-items: center; height: 15px; padding: 0 0 0 2px; }
    h2 { margin: 0; font-size: inherit; font-weight: 400; color: #444; }
    .type { display: flex; align-items: center; height: 46px; border: 1px solid #dadada; padding: 0 1px 0 2px; }
    .thumb { display: grid; place-items: center; width: 44px; height: 43px; border: 1px solid #dedede; background: #f3f3f3; }
    .thumb svg { width: 22px; height: 22px; }
    .type .name { flex: 1; padding-left: 3px; }
    .pick { display: flex; align-items: center; height: 17px; }
    .combo { position: relative; width: 208px; margin-left: 1px; }
    .combo select { width: 100%; height: 15px; appearance: none; background: #e3e3e3; border: 1px solid #bbb; padding: 0 12px 0 1px; }
    .chev { position: absolute; right: 3px; top: 4px; width: 7px; height: 7px; color: #555; pointer-events: none; }
    .edit { display: flex; align-items: center; gap: 2px; padding-left: 3px; white-space: nowrap; }
    .scroll { flex: 1; background: #fff; min-height: 0; overflow: hidden; }
    table { width: 100%; border-collapse: collapse; table-layout: fixed; }
    col.n { width: 130px; } col.e { width: 8px; }
    th, td { height: 12px; padding: 0; line-height: 10px; text-align: left; font-weight: 400; white-space: pre; overflow: hidden; border-bottom: 1px solid #dedede; vertical-align: middle; }
    tbody th, td { border-right: 1px solid #dedede; }
    tbody th { padding-left: 6px; }
    td { padding-left: 2px; }
    .off { color: #8b8b8b; }
    .group th { background: #dcdcdc; padding: 0 2px; border-right: 0; }
    .head { display: flex; justify-content: space-between; align-items: center; }
    .head svg { width: 6px; height: 7px; }
    td.ctl { padding: 0 0 0 1px; }
    .field { display: block; width: 100%; height: 11px; border: 1px solid #333; padding: 0 2px; background: #fff; }
    td button { display: block; width: 100%; height: 10px; line-height: 8px; text-align: center; background: #e1e1e1; border: 1px solid #bdbdbd; border-bottom-color: #999; }
    input[type="checkbox"] { appearance: none; display: block; width: 9px; height: 9px; margin-left: 1px; border: 1px solid #555; background: #fff; }
    input[disabled] { border-color: #ccc; }
    footer { display: flex; justify-content: space-between; align-items: center; height: 19px; padding: 0 1px 0 2px; }
    footer a { color: #1a56a8; }
    footer button { width: 49px; height: 15px; background: #ccc; border: 1px solid #c0c0c0; color: #888; }
  `];
  private value(r: Prop, id: string) {
    if (r.kind === "check") return html`<input type="checkbox" id=${id} ?disabled=${r.off} />`;
    if (r.kind === "button") return html`<button id=${id}>${r.value}</button>`;
    if (r.kind === "field") return html`<input class="field" id=${id} .value=${r.value ?? ""} />`;
    return html`<span id=${id}>${r.value}</span>`;
  }
  render() {
    return html`
      <header><h2>Propriedades</h2><button aria-label="Fechar">${glyph("close")}</button></header>
      <div class="type"><span class="thumb">${glyph("house")}</span><span class="name">Vista 3D</span>${caret()}</div>
      <div class="pick">
        <span class="combo"><select aria-label="Vista"><option>Vista 3D: {3D}</option></select>${chevron("chev", "M1 3l3 3 3-3")}</span>
        <button class="edit">${glyph("editType")}Editar tipo</button>
      </div>
      <div class="scroll"><table>
        <colgroup><col class="n" /><col /><col class="e" /></colgroup>
        ${groups.map((g, gi) => html`<tbody>
          <tr class="group"><th colspan="3"><span class="head">${g.title}<svg viewBox="0 0 6 7"><path d="M1 3l2-2 2 2M1 6l2-2 2 2" fill="none" stroke="#222" /></svg></span></th></tr>
          ${g.rows.map((r, i) => html`<tr class=${classMap({ off: !!r.off })}>
            <th scope="row"><label for="p${gi}-${i}">${r.name}</label></th>
            <td class=${classMap({ ctl: r.kind === "button" || r.kind === "field" })}>${this.value(r, `p${gi}-${i}`)}</td><td></td>
          </tr>`)}
        </tbody>`)}
      </table></div>
      <footer><a href="#ajuda">Ajuda de propriedades</a><button disabled>Aplicar</button></footer>`;
  }
}

@customElement("app-canvas")
class AppCanvas extends LitElement {
  static styles = [shared, css`
    :host { display: flex; flex-direction: column; min-width: 0; background: #fff; border-left: 1px solid #d0d0d0; border-right: 2px solid #d4d4d4; color: #333; }
    .tabs { display: flex; align-items: stretch; height: 15px; background: #c8c8c8; color: #555; }
    .tab { display: flex; align-items: center; gap: 4px; width: 128px; padding-left: 2px; white-space: nowrap; }
    .tab.second { width: 111px; padding-left: 19px; }
    .tab.third { width: 179px; padding-left: 19px; }
    .tab.active { width: 86px; background: #fff; color: #222; padding: 0 1px 0 3px; }
    .tab.active .x { margin-left: auto; }
    .more { margin-left: auto; padding-right: 0; }
    .mid { flex: 1; display: flex; min-height: 0; }
    .stage { flex: 1; position: relative; min-width: 0; overflow: hidden; }
    .stage > .model { width: 100%; height: 100%; }
    .cube { position: absolute; right: 14px; top: 34px; width: 92px; height: 74px; }
    .cube text { font-family: Roboto, "Liberation Sans", sans-serif; fill: #888; }
    .nav { position: absolute; right: 0; top: 114px; width: 24px; height: 79px; display: flex; flex-direction: column; align-items: center; border: 1px solid #b5b5b5; border-radius: 4px; background: #f2f2f2; color: #888; }
    .nav .dot { width: 6px; height: 6px; border: 1px solid #999; border-radius: 50%; align-self: flex-end; margin: 2px 2px 0 0; }
    .nav .wheel { margin-top: 4px; } .nav .wheel svg { width: 16px; height: 16px; }
    .nav .caret { width: 3px; height: 2px; margin: 5px 0 4px; }
    .nav hr { width: 18px; border: 0; border-top: 1px solid #bbb; margin: 0 0 3px; }
    .nav .zoom svg { width: 12px; height: 12px; }
    .vbar { width: 12px; display: flex; flex-direction: column; align-items: center; justify-content: space-between; background: #f0f0f0; padding: 2px 0; }
    .thumb-v { width: 9px; height: 11px; background: #c6c6c6; }
    .arrow { width: 6px; height: 7px; }
    .view { display: flex; align-items: center; height: 13px; background: #f0f0f0; padding-left: 17px; }
    .scale { width: 36px; text-align: left; }
    .icons { display: flex; gap: 2px; }
    .icons svg { width: 12px; height: 11px; }
    .track { flex: 1; display: flex; align-items: center; justify-content: space-between; height: 13px; padding: 0 15px 0 4px; }
    .thumb-h { width: 11px; height: 9px; background: #c6c6c6; }
  `];
  render() {
    const names = ["hatch", "style", "sun", "shadow", "render", "crop", "cropShow", "lock3d", "glasses", "bulb", "frame", "analytic", "cubes", "constraint"];
    return html`
      <div class="tabs">
        <button class="tab">${glyph("sheetTab")}Det. 1 - Baldrame/Parede 15cm</button>
        <button class="tab second">${glyph("sheet")}01/02 - Arquitetônico</button>
        <button class="tab third">${glyph("sheetTab")}Det. 5 - Viga Respaldo/Parede 15 cm</button>
        <button class="tab active">${glyph("cube")}{3D}<span class="x">${glyph("close")}</span></button>
        <button class="more" aria-label="Mais abas">${glyph("menu")}</button>
      </div>
      <div class="mid">
        <div class="stage">
          <svg class="model" viewBox="271 130 819 561" preserveAspectRatio="xMidYMid slice" role="img" aria-label="Vista 3D">
            <path d="M486 632L892 130H956V315L652 691H486z" fill="#dedede" />
            <path d="M621.500 691L928.500 311l6 1L627.500 691zM645 691L949 314l7 1L652 691z" fill="#dfe3f6" />
            <path d="M458 629.500l27.500 3V691H458z" fill="#808080" />
            <g fill="none" stroke="#8090bd" stroke-width="1.400">
              <path d="M459 628L861 130M465 628L867 130M481 631L886 130" />
              <path d="M621.500 691L928.500 311M627.500 691L934.500 312M645 691L949 314" stroke="#7380b8" />
            </g>
            <g fill="none" stroke="#33508f" stroke-width="1.400">
              <path d="M485.500 632.500L892 130" /><path d="M652 691L956 315" />
              <path d="M956 130V315M928.500 311l27.500 4" /><path d="M928.500 130V311" stroke="#6079ad" />
              <path d="M458 691V401l27.500 2.500V691M458 629.500l27.500 3M458 401l6-8" />
              <path d="M485.500 403.500L706 130" />
            </g>
            <path d="M463.500 365.500L652 130H699L480 402.500l-16.500-2.500z" fill="#a5535e" />
            <g fill="none" stroke="#7b479a" stroke-width="1.500">
              <path d="M464 397L675 130" stroke="#764ba6" stroke-width="2" /><path d="M465 399L682 130" />
            </g>
            <g fill="none" stroke="#3a2f70" stroke-width="1.400">
              <path d="M463.500 400V365.500L652 130M463.500 365.500L480 368L671 130M480 368V402.500L699 130M463.500 400l16.500 2.500" />
            </g>
            <path d="M495 345v11l2.500-2 1.500 4 2-1-1.500-3.500h3.500z" fill="#fff" stroke="#444" stroke-width=".6" />
          </svg>
          <svg class="cube" viewBox="984 164 92 74" role="img" aria-label="ViewCube">
            <ellipse cx="1030" cy="211" rx="38.500" ry="16.500" fill="none" stroke="#f1f1f1" stroke-width="8" />
            <ellipse cx="1030" cy="211" rx="43.500" ry="20.500" fill="none" stroke="#bbb" stroke-dasharray="5 1" stroke-width=".8" />
            <ellipse cx="1030" cy="211" rx="33.500" ry="13" fill="none" stroke="#bbb" stroke-dasharray="3 1" stroke-width=".8" />
            <ellipse cx="1029" cy="212" rx="22" ry="6" fill="#ddd" />
            <path d="M1008.500 179l33 3.500V214l-32-6z" fill="#efefef" stroke="#888" stroke-width=".8" />
            <path d="M1008.500 179l12-10 30 2-9 11.500z" fill="#f6f6f6" stroke="#888" stroke-width=".8" />
            <path d="M1041.500 182.500l9-11.500-2 30-7 13z" fill="#dcdcdc" stroke="#888" stroke-width=".8" />
            <text x="1010" y="199" font-size="7" font-weight="700" transform="rotate(3 1010 199)">FRONTAL</text>
            <text x="1016" y="176" font-size="5" font-weight="700" transform="rotate(4 1016 176)">SUPERIOR</text>
            <text x="1043" y="196" font-size="5" font-weight="700" transform="rotate(-60 1045 194)">DIR</text>
            <text x="990" y="204" font-size="6">O</text><text x="1011" y="231" font-size="6">S</text><text x="1065" y="216" font-size="6">L</text>
          </svg>
          <div class="nav">
            <span class="dot"></span>
            <button class="wheel" aria-label="Roda de navegação"><svg viewBox="0 0 16 16"><path d="M8 1h7v7a7 7 0 1 1-7-7z" fill="#eee" stroke="#999" /><circle cx="8" cy="8" r="4.500" fill="#f6f6f6" stroke="#999" /><circle cx="8" cy="8" r="2.500" fill="#fff" stroke="#aaa" stroke-width=".7" /></svg></button>
            ${caret()}<hr />
            <button class="zoom" aria-label="Zoom na região"><svg viewBox="0 0 12 12"><path d="M1 1h7v7H1z" fill="#a9d39d" stroke="#7fb374" /><circle cx="8" cy="8" r="2.300" fill="#fff" stroke="#888" /><path d="M9.500 9.500l2 2" stroke="#888" stroke-width="1.300" /></svg></button>
            ${caret()}<span class="dot"></span>
          </div>
        </div>
        <div class="vbar">
          ${chevron("arrow", "M1 6l3-4 3 4")}<span class="thumb-v"></span>${chevron("arrow", "M1 2l3 4 3-4")}
        </div>
      </div>
      <div class="view">
        <span class="scale">1 : 100</span>
        <span class="icons">${names.map((n) => glyph(n))}</span>
        <span class="track">${chevron("arrow", "M6 1L2 4l4 3")}<span class="thumb-h"></span>${chevron("arrow", "M2 1l4 3-4 3")}</span>
      </div>`;
  }
}

@customElement("app-browser")
class AppBrowser extends LitElement {
  @property({ type: String }) project = "Projeto1";
  static styles = [shared, css`
    :host { display: flex; flex-direction: column; background: #fff; color: #222; min-width: 0; }
    header { display: flex; align-items: center; justify-content: space-between; height: 14px; padding-left: 3px; background: #f0f0f0; }
    h2 { margin: 0; font-size: inherit; font-weight: 400; color: #444; }
    ul { list-style: none; margin: 0; padding: 0 0 0 4px; }
    li { display: flex; align-items: center; height: 12px; }
    .plus { width: 6px; height: 6px; }
    .line { width: 3px; border-top: 1px dotted #aaa; margin-right: 1px; }
    li .leaf { width: 6px; height: 12px; }
    li span.name { padding: 0 2px; margin-left: 1px; line-height: 11px; white-space: nowrap; }
    li .sel { background: #e2e2e2; }
    li .g12 { width: 11px; height: 11px; }
  `];
  render() {
    const items = [["views", "Vistas (todas)"], ["legend", "Legendas"], ["table", "Tabelas/Quantidades (todas)"], ["folha", "Folhas (todas)"], ["family", "Famílias"], ["grp", "Grupos"], ["link", "Vínculos do Revit"]];
    return html`
      <header><h2>Navegador de projeto - ${this.project}</h2><button aria-label="Fechar">${glyph("close")}</button></header>
      <ul>${items.map(([icon, name], i) => html`<li>
        ${icon === "link"
          ? html`<svg class="leaf" viewBox="0 0 6 12"><path d="M3 0v6h3" fill="none" stroke="#aaa" stroke-dasharray="1 1" /></svg>`
          : html`<svg class="plus" viewBox="0 0 6 6"><path d="M.5.5h5v5h-5z" fill="#fff" stroke="#888" /><path d="M1.500 3h3M3 1.500v3" stroke="#444" stroke-width=".8" /></svg>`}
        <span class="line"></span>${glyph(icon)}<span class=${classMap({ name: true, sel: i === 0 })}>${name}</span>
      </li>`)}</ul>`;
  }
}

@customElement("app-status")
class AppStatus extends LitElement {
  static styles = [shared, css`
    :host { display: grid; grid-template-columns: minmax(0, 589fr) auto minmax(0, 328fr); align-items: center; height: 16px; padding-top: 2px; background: #cbcbcb; border-bottom: 1px solid #c4e0d8; color: #222; }
    .msg { padding-left: 1px; white-space: nowrap; }
    .mid, .end { display: flex; align-items: center; }
    .end { justify-content: flex-end; gap: 5px; padding-right: 48px; }
    .end button { display: block; }
    .combo { position: relative; width: 136px; margin-left: 5px; }
    .combo select { display: block; width: 100%; height: 12px; appearance: none; background: #fff; color: #777; padding: 0 12px 0 2px; }
    .combo svg { position: absolute; right: 2px; top: 3px; width: 6px; height: 6px; color: #999; }
    .filter { display: flex; align-items: center; gap: 2px; margin: 0 14px 0 6px; }
    .opts { display: flex; gap: 5px; }
    .count { display: flex; align-items: center; }
  `];
  render() {
    const sel = [["selLink", "Selecionar vínculos"], ["selUnder", "Selecionar subjacentes"], ["selPin", "Selecionar fixados"], ["selFace", "Selecionar por face"], ["drag", "Arrastar"], ["gear", "Processos"]];
    return html`
      <span class="msg">Paredes empilhadas : Parede empilhada : Parede aula</span>
      <span class="mid">
        ${glyph("worksets")}
        <span class="combo"><select aria-label="Workset ativo"><option></option></select>${chevron("c", "M1 2l3 4 3-4")}</span>
        <span class="filter">${glyph("edit")}:0</span>
        <span class="opts">${glyph("list")}${glyph("excl")}</span>
        <span class="combo"><select aria-label="Opção de projeto"><option>Modelo principal</option></select>${chevron("c", "M1 2l3 4 3-4")}</span>
      </span>
      <span class="end">${sel.map(([i, l]) => html`<button aria-label=${l}>${glyph(i)}</button>`)}<span class="count">${glyph("funnel")}:0</span></span>`;
  }
}

@customElement("app-root")
class AppRoot extends LitElement {
  static styles = css`
    :host { display: flex; flex-direction: column; height: 100vh; overflow: hidden; background: #c8c8c8; font: 8px/10px Lato, "Liberation Sans", sans-serif; font-variant-ligatures: none; }
    .work { flex: 1; min-height: 0; display: grid; grid-template-columns: 270px minmax(0, 1fr) 176px; }
  `;
  render() {
    return html`
      <app-titlebar></app-titlebar>
      <app-ribbon></app-ribbon>
      <main class="work">
        <app-properties></app-properties>
        <app-canvas></app-canvas>
        <app-browser></app-browser>
      </main>
      <app-status></app-status>`;
  }
}
